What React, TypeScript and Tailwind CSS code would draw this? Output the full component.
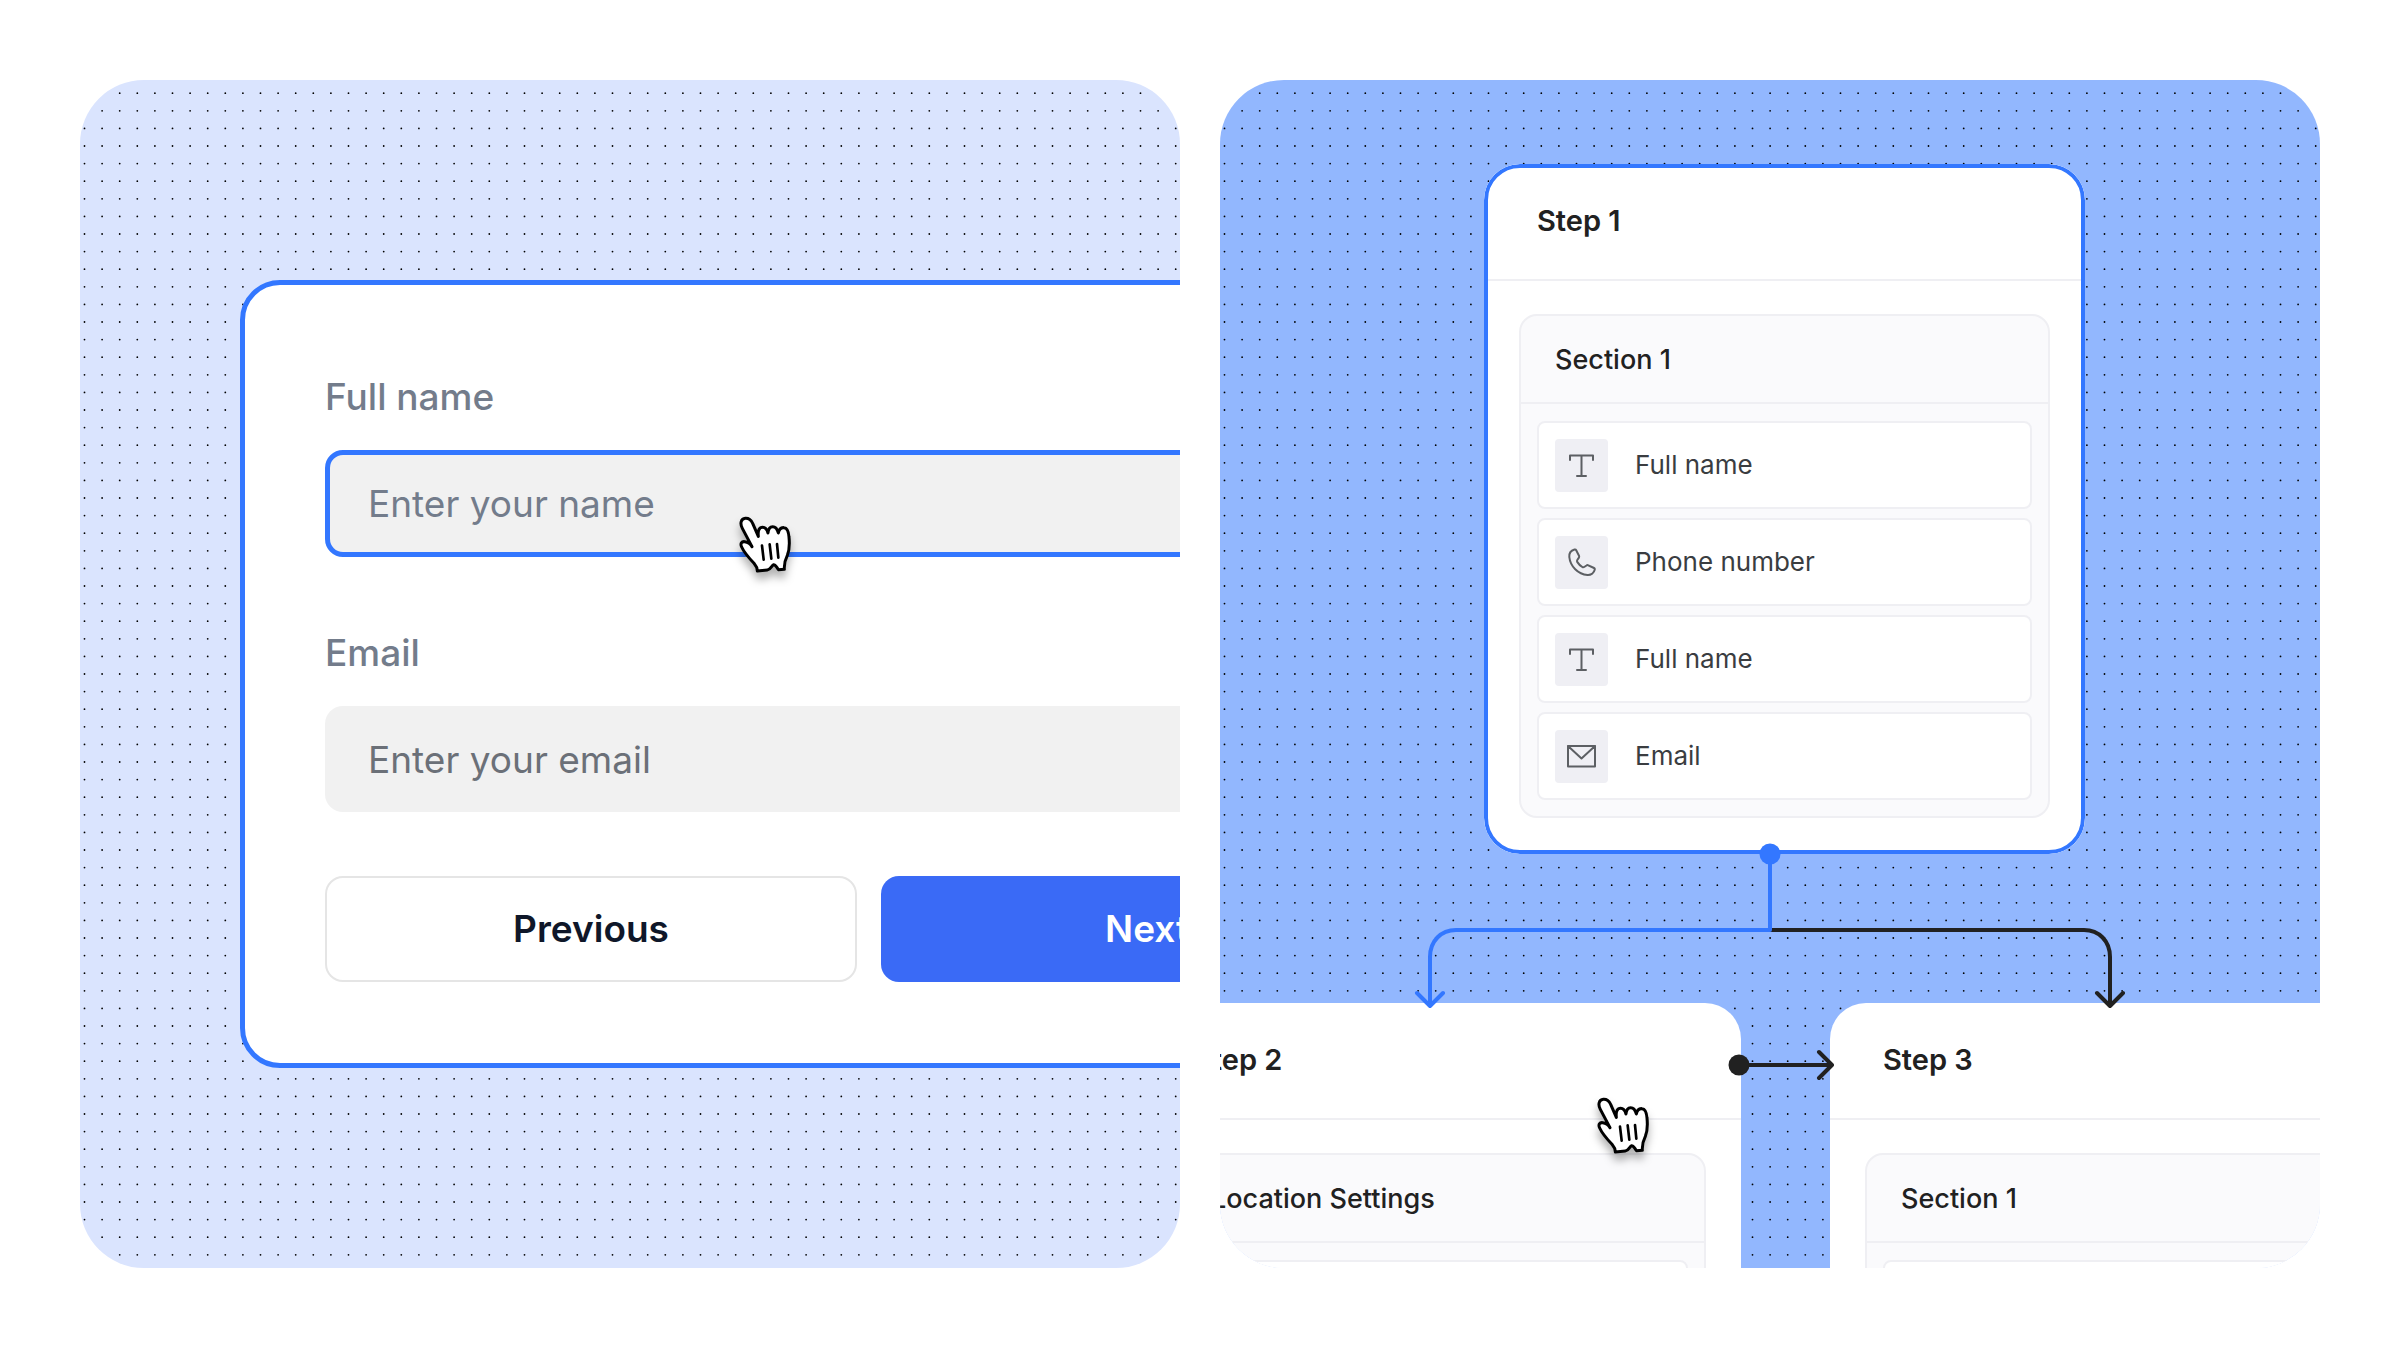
import { useId, type ReactNode } from 'react';

const GRID_STEP = 17.6;
const GRID_CELLS = [0, 1, 2, 3, 4];

function DotGrid() {
  const id = useId();
  return (
    <svg className="pointer-events-none absolute inset-0 size-full" aria-hidden="true">
      <defs>
        <pattern id={id} width="88" height="88" patternUnits="userSpaceOnUse">
          {GRID_CELLS.map((row) =>
            GRID_CELLS.map((col) => (
              <circle key={`${row}-${col}`} cx={4.5 + col * GRID_STEP} cy={13.2 + row * GRID_STEP} r="0.88" fill="#000" />
            )),
          )}
        </pattern>
      </defs>
      <rect width="100%" height="100%" fill={`url(#${id})`} />
    </svg>
  );
}

function HandCursor() {
  return (
    <svg
      width="70"
      height="80"
      viewBox="0 0 210 240"
      className="pointer-events-none overflow-visible drop-shadow-[0_7px_4px_rgba(0,0,0,0.3)]"
      aria-hidden="true"
    >
      <path
        d="M60 113 L31 58 C23 43 27 29 40 28 C51 27 57 33 62 43 L79 82 C77 63 82 55 92 55 C101 55 105 61 108 72 C109 60 113 53 122 53 C131 53 136 60 139 72 C141 62 147 55 156 56 C168 57 170 70 171 84 C173 104 173 122 166 139 C159 153 156 166 157 181 L139 182 C136 176 131 168 125 167 C118 170 117 182 106 183 L76 186 C76 176 72 170 66 163 C50 146 36 130 29 114 C24 103 29 97 38 98 C48 99 55 104 60 113 Z"
        fill="#fff"
        stroke="#000"
        strokeWidth="9"
        strokeLinejoin="round"
      />
      <path d="M90 110 L95 152 M113 106 L118 149 M135 105 L139 146" fill="none" stroke="#000" strokeWidth="8" strokeLinecap="round" />
    </svg>
  );
}

function TextIcon() {
  return (
    <svg width="53" height="53" viewBox="0 0 53 53" fill="none" stroke="#5c5f63" strokeWidth="2" strokeLinecap="round" strokeLinejoin="round" aria-hidden="true">
      <path d="M15 21V16.500H38V21M26.500 16.500V37M22 37H31" />
    </svg>
  );
}

function PhoneIcon() {
  return (
    <svg width="53" height="53" viewBox="0 0 53 53" fill="none" stroke="#5c5f63" strokeWidth="2" strokeLinecap="round" strokeLinejoin="round" aria-hidden="true">
      <path d="M19.500 13.500C16 14.500 14 17.500 14.300 21C15.300 30.500 23 38.200 32.500 39C36 39.200 39 37 39.800 33.600C39.900 33 39.600 32.300 39 32L33.300 29.300C32.700 29 32 29.100 31.500 29.500L29.200 31C28.600 31.400 27.900 31.400 27.300 31C25.200 29.700 23.500 28 22.200 25.900C21.900 25.300 21.900 24.600 22.300 24L23.900 21.600C24.300 21 24.300 20.400 24 19.700L21.200 14.200C20.900 13.600 20.200 13.300 19.500 13.500Z" />
    </svg>
  );
}

function MailIcon() {
  return (
    <svg width="53" height="53" viewBox="0 0 53 53" fill="none" stroke="#5c5f63" strokeWidth="2" strokeLinecap="round" strokeLinejoin="round" aria-hidden="true">
      <path d="M13 16H40V36.500H13ZM13 16L26.500 28.500L40 16" />
    </svg>
  );
}

type Field = { label: string; icon: ReactNode };

const textField: Field = { label: 'Full name', icon: <TextIcon /> };
const phoneField: Field = { label: 'Phone number', icon: <PhoneIcon /> };
const emailField: Field = { label: 'Email', icon: <MailIcon /> };

type StepCardProps = { title: string; section: string; fields: Field[]; selected?: boolean };

function StepCard({ title, section, fields, selected = false }: StepCardProps) {
  return (
    <article className="relative w-[601px] overflow-hidden rounded-[36px] bg-white">
      <header className="border-b-2 border-[#efeff3] px-[53px] pt-9 pb-[37px]">
        <h2 className="text-[29px] leading-[42px] font-semibold text-[#212121]">{title}</h2>
      </header>
      <div className="px-[35px] pt-[33px] pb-9">
        <section className="rounded-[18px] border-2 border-[#efeff3] bg-[#fafafc]">
          <h3 className="border-b-2 border-[#efeff3] px-[34px] pt-[25px] pb-[23px] text-[27px] leading-[38px] font-medium text-[#212121]">{section}</h3>
          <ul className="flex flex-col gap-[9px] p-4 pt-[17px]">
            {fields.map((field, i) => (
              <li key={i} className="flex min-h-[88px] items-center gap-[27px] rounded-lg border-2 border-[#efeff3] bg-white px-4">
                <span className="flex size-[53px] items-center justify-center rounded-[4px] bg-[#efeff4]">{field.icon}</span>
                <span className="text-[26px] leading-[38px] text-[#3a3d41]">{field.label}</span>
              </li>
            ))}
          </ul>
        </section>
      </div>
      {selected && <div className="pointer-events-none absolute inset-0 rounded-[36px] border-4 border-[#3377ff]" />}
    </article>
  );
}

function Connectors() {
  return (
    <svg className="pointer-events-none absolute inset-0 size-full" fill="none" strokeWidth="4" strokeLinecap="round" strokeLinejoin="round" aria-hidden="true">
      <g stroke="#212121">
        <path d="M550 850H864C879 850 890 861 890 877V925M877 913L890 926L903 913" />
        <path d="M519 985H611M599 972L612 985L599 998" />
        <circle cx="519" cy="985" r="10.500" fill="#212121" stroke="none" />
      </g>
      <g stroke="#3377ff">
        <path d="M550 774V850H236C221 850 210 861 210 877V925M197 913L210 926L223 913" />
        <circle cx="550" cy="774" r="10.500" fill="#3377ff" stroke="none" />
      </g>
    </svg>
  );
}

function FormPreview() {
  return (
    <form
      onSubmit={(e) => e.preventDefault()}
      className="relative -mr-[318px] ml-[160px] flex flex-col rounded-[40px] border-5 border-[#3377ff] bg-white px-20 pt-[88px] pb-[81px] text-[37px] leading-[48px]"
    >
      <div className="flex flex-col gap-[29px]">
        <label htmlFor="full-name" className="font-medium text-[#737c8b]">Full name</label>
        <input
          id="full-name"
          type="text"
          placeholder="Enter your name"
          className="h-[107px] w-full rounded-[18px] border-5 border-[#3377ff] bg-[#f1f1f1] px-[38px] placeholder:text-[#737c8b] focus:outline-none"
        />
      </div>
      <div className="mt-[72px] flex flex-col gap-[29px]">
        <label htmlFor="email" className="font-medium text-[#737c8b]">Email</label>
        <input
          id="email"
          type="email"
          placeholder="Enter your email"
          className="h-[106px] w-full rounded-[18px] bg-[#f1f1f1] px-[43px] placeholder:text-[#6b7078] focus:outline-none"
        />
      </div>
      <div className="mt-16 grid grid-cols-2 gap-6">
        <button type="button" className="h-[106px] rounded-[18px] border-2 border-[#e5e5e5] bg-white font-semibold text-[#0f1729]">Previous</button>
        <button type="submit" className="h-[106px] rounded-[18px] bg-[#3a6af6] font-semibold text-white">Next</button>
      </div>
    </form>
  );
}

export default function App() {
  return (
    <main className="grid min-h-screen grid-cols-2 items-start gap-10 bg-white p-20 font-['Inter',sans-serif]">
      <section className="relative overflow-hidden rounded-[64px] bg-[#dae4fe] py-[200px]" aria-label="Form preview">
        <DotGrid />
        <FormPreview />
        <div className="absolute top-[429px] left-[652px]">
          <HandCursor />
        </div>
      </section>

      <section className="relative h-[1188px] overflow-hidden rounded-[64px] bg-[#92b7fe]" aria-label="Flow builder">
        <DotGrid />
        <div className="absolute top-[84px] left-[264px]">
          <StepCard title="Step 1" section="Section 1" fields={[textField, phoneField, textField, emailField]} selected />
        </div>
        <div className="absolute top-[923px] -left-20">
          <StepCard title="Step 2" section="Location Settings" fields={[textField]} />
        </div>
        <div className="absolute top-[923px] left-[610px]">
          <StepCard title="Step 3" section="Section 1" fields={[textField]} />
        </div>
        <Connectors />
        <div className="absolute top-[1010px] left-[370px]">
          <HandCursor />
        </div>
      </section>
    </main>
  );
}
